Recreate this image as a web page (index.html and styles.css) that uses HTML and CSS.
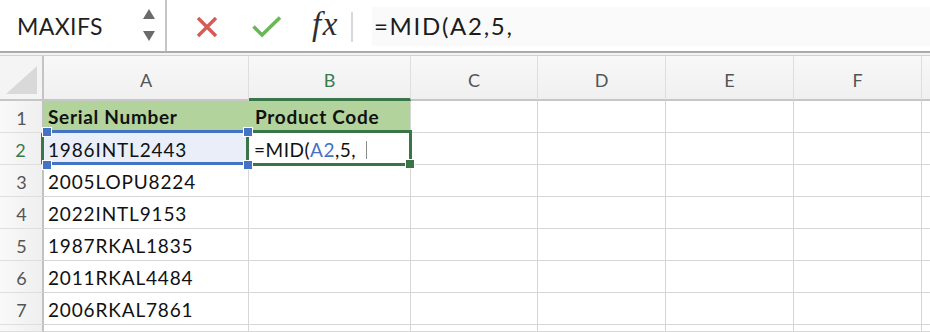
FILE: index.html
```html
<!DOCTYPE html>
<html>
<head>
<meta charset="utf-8">
<link rel="stylesheet" href="styles.css">
</head>
<body>
<div class="app">
  <div class="topbar">
    <div class="namebox">
      <span class="name">MAXIFS</span>
      <svg class="spin" width="14" height="34" viewBox="0 0 14 34">
        <polygon points="1,10 13,10 7,0" fill="#6b6b6b"/>
        <polygon points="1,22 13,22 7,32" fill="#6b6b6b"/>
      </svg>
    </div>
    <div class="tools">
      <svg class="icon-x" width="22" height="22" viewBox="0 0 22 22">
        <path d="M2 2 L20 20 M20 2 L2 20" stroke="#d65b57" stroke-width="3.4" stroke-linecap="butt" fill="none"/>
      </svg>
      <svg class="icon-check" width="30" height="22" viewBox="0 0 30 22">
        <path d="M1.5 10.5 L10 19 L28 1.5" stroke="#6cb65a" stroke-width="3.6" fill="none"/>
      </svg>
      <span class="fx">fx</span>
      <span class="sep"></span>
    </div>
    <div class="formula">=MID(A2,5,</div>
  </div>
  <div class="divider"></div>
  <div class="sheet">
    <div class="grid">
      <div class="corner"><svg width="31" height="28" viewBox="0 0 31 28"><polygon points="0,28 31,28 31,0" fill="#d9d9d9"/></svg></div>
      <div class="colhdr">A</div>
      <div class="colhdr active">B</div>
      <div class="colhdr">C</div>
      <div class="colhdr">D</div>
      <div class="colhdr">E</div>
      <div class="colhdr">F</div>
      <div class="colhdr last"></div>

      <div class="rowhdr">1</div>
      <div class="cell head">Serial Number</div>
      <div class="cell head">Product Code</div>
      <div class="cell"></div><div class="cell"></div><div class="cell"></div><div class="cell"></div><div class="cell last"></div>

      <div class="rowhdr active">2</div>
      <div class="cell ref">1986INTL2443</div>
      <div class="cell edit">=MID(<span class="refname">A2</span>,5,<span class="caret"></span></div>
      <div class="cell"></div><div class="cell"></div><div class="cell"></div><div class="cell"></div><div class="cell last"></div>

      <div class="rowhdr">3</div>
      <div class="cell">2005LOPU8224</div>
      <div class="cell"></div><div class="cell"></div><div class="cell"></div><div class="cell"></div><div class="cell"></div><div class="cell last"></div>

      <div class="rowhdr">4</div>
      <div class="cell">2022INTL9153</div>
      <div class="cell"></div><div class="cell"></div><div class="cell"></div><div class="cell"></div><div class="cell"></div><div class="cell last"></div>

      <div class="rowhdr">5</div>
      <div class="cell">1987RKAL1835</div>
      <div class="cell"></div><div class="cell"></div><div class="cell"></div><div class="cell"></div><div class="cell"></div><div class="cell last"></div>

      <div class="rowhdr">6</div>
      <div class="cell">2011RKAL4484</div>
      <div class="cell"></div><div class="cell"></div><div class="cell"></div><div class="cell"></div><div class="cell"></div><div class="cell last"></div>

      <div class="rowhdr">7</div>
      <div class="cell">2006RKAL7861</div>
      <div class="cell"></div><div class="cell"></div><div class="cell"></div><div class="cell"></div><div class="cell"></div><div class="cell last"></div>

      <div class="rowhdr"></div>
      <div class="cell"></div><div class="cell"></div><div class="cell"></div><div class="cell"></div><div class="cell"></div><div class="cell"></div><div class="cell last"></div>
    </div>

    <div class="sel-green"></div>
    <div class="fill-handle"></div>
    <div class="sel-blue"></div>
    <div class="knob k1"></div>
    <div class="knob k2"></div>
    <div class="knob k3"></div>
    <div class="knob k4"></div>
  </div>
</div>
</body>
</html>
```

FILE: styles.css
```css
* { box-sizing: border-box; }
html, body { margin: 0; padding: 0; background: #fff; }
body { width: 930px; height: 332px; overflow: hidden; font-family: Lato, "Open Sans", sans-serif; }

.app { width: 930px; height: 332px; display: flex; flex-direction: column; }

.topbar { height: 51px; display: flex; align-items: stretch; background: #fff; }
.namebox {
  width: 167px;
  border-right: 2px solid #c6c6c6;
  display: flex;
  align-items: center;
  padding-left: 17px;
  padding-right: 8px;
}
.name { font-size: 23px; color: #1f1f1f; flex: 1; padding-top: 1px; letter-spacing: 0.4px; }
.spin { margin-right: 1px; margin-top: 1px; }

.tools { display: flex; align-items: center; width: 203px; padding-left: 29px; }
.icon-x { margin-top: 2px; }
.icon-check { margin-left: 34px; margin-top: 3px; }
.fx {
  font-family: "Liberation Serif", "DejaVu Serif", serif;
  font-style: italic;
  font-size: 33px;
  color: #2e2e2e;
  margin-left: 30px;
  margin-top: -3px;
  letter-spacing: 1.5px;
}
.sep { width: 2px; height: 30px; background: #d8d8d8; margin-left: 12px; margin-top: 2px; }

.formula {
  flex: 1;
  margin: 7px 0 5px 2px;
  background: #fafafa;
  font-size: 24px;
  color: #1c1c1c;
  display: flex;
  align-items: center;
  padding-left: 2px;
  padding-bottom: 3px;
  letter-spacing: 1.7px;
}

.divider {
  height: 5px;
  border-top: 2px solid #ababab;
  border-bottom: 1px solid #d2d2d2;
  background: #f3f3f3;
}

.sheet { position: relative; flex: 1; overflow: hidden; }

.grid {
  display: grid;
  grid-template-columns: 44px 205px 162px 127px 128px 128px 128px 1fr;
  grid-template-rows: 45px repeat(7, 32px) 1fr;
  height: 100%;
}

.corner {
  background: #f4f4f4;
  border-right: 2px solid #c4c4c4;
  border-bottom: 2px solid #c6c6c6;
  display: flex;
  align-items: flex-end;
  justify-content: flex-end;
  padding: 0 5px 5px 0;
}

.colhdr {
  background: linear-gradient(#f8f8f8, #f0f0f0);
  border-right: 1px solid #dedede;
  border-bottom: 2px solid #c6c6c6;
  color: #555;
  font-size: 18px;
  display: flex;
  align-items: center;
  justify-content: center;
  padding-top: 5px;
}
.colhdr.active { color: #3b7a4a; border-bottom: 3px solid #3a7549; padding-top: 6px; }
.colhdr.last { border-right: none; }

.rowhdr {
  background: linear-gradient(90deg, #f9f9f9, #efefef);
  border-right: 2px solid #c2c2c2;
  border-bottom: 1px solid #dedede;
  color: #555;
  font-size: 18px;
  display: flex;
  align-items: center;
  justify-content: center;
  padding-top: 2px;
  padding-left: 1px;
}
.rowhdr.active { color: #3b7a4a; border-right: 3px solid #3a7549; padding-left: 0; }

.cell {
  border-right: 1px solid #d6d6d6;
  border-bottom: 1px solid #d6d6d6;
  font-size: 19px;
  color: #111;
  display: flex;
  align-items: center;
  padding-left: 4px;
  padding-top: 2px;
  letter-spacing: 0.85px;
  white-space: nowrap;
}
.cell.last { border-right: none; }
.cell.head {
  background: #b2d49c;
  font-weight: 700;
  letter-spacing: 0.7px;
  padding-top: 0;
  border-right-color: #b2d49c;
}
.cell.head + .cell.head { padding-left: 6px; border-right-color: #d6d6d6; }
.cell.ref { background: #e9eef8; }
.cell.edit { padding-left: 5px; position: relative; letter-spacing: 0.5px; }
.refname { color: #4472c4; }
.caret { display: inline-block; width: 1px; height: 18px; background: #8a8a8a; margin-left: 10px; }

/* overlays: selection outlines drawn on top of the grid */
.sel-green {
  position: absolute;
  left: 246px; top: 74px;
  width: 166px; height: 36px;
  border: 3px solid #3a7549;
}
.fill-handle {
  position: absolute;
  left: 405px; top: 103px;
  width: 10px; height: 10px;
  background: #3a7549;
  border: 1px solid #fff;
}
.sel-blue {
  position: absolute;
  left: 45px; top: 74px;
  width: 203px; height: 35px;
  border-top: 3px solid #4472c4;
  border-bottom: 3px solid #4472c4;
}
.knob {
  position: absolute;
  width: 10px; height: 10px;
  background: #4472c4;
  border: 1px solid #fff;
}
.k1 { left: 42px; top: 71px; }
.k2 { left: 243px; top: 71px; }
.k3 { left: 42px; top: 104px; }
.k4 { left: 243px; top: 104px; }
```
